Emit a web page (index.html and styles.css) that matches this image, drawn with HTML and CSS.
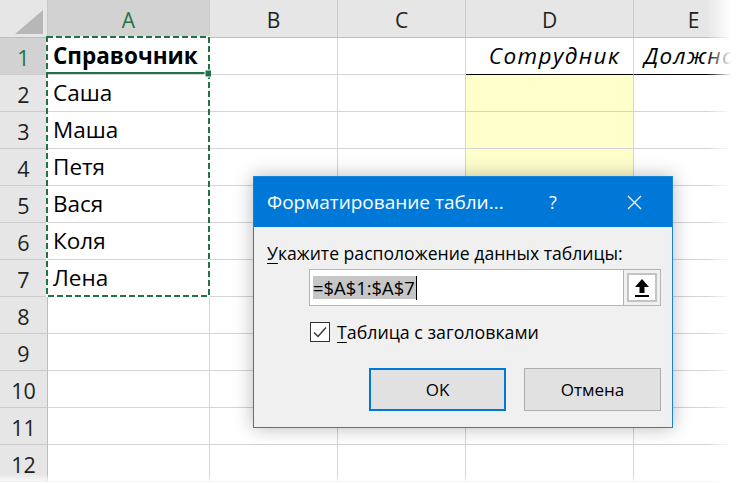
FILE: index.html
```html
<!DOCTYPE html>
<html lang="ru">
<head>
<meta charset="utf-8">
<link rel="stylesheet" href="styles.css">
</head>
<body>
<div class="sheet">
  <div class="grid">
    <div class="corner"><svg width="36" height="30" viewBox="0 0 36 30"><polygon points="34,4 34,28 6,28" fill="#b7b7b7"/></svg></div>
    <div class="ch sel">A</div><div class="ch">B</div><div class="ch">C</div><div class="ch">D</div><div class="ch">E</div>

    <div class="rh sel">1</div><div class="c b">Справочник</div><div class="c"></div><div class="c"></div><div class="c it th center">Сотрудник</div><div class="c it th">Должность</div>
    <div class="rh">2</div><div class="c">Саша</div><div class="c"></div><div class="c"></div><div class="c y"></div><div class="c"></div>
    <div class="rh">3</div><div class="c">Маша</div><div class="c"></div><div class="c"></div><div class="c y"></div><div class="c"></div>
    <div class="rh">4</div><div class="c">Петя</div><div class="c"></div><div class="c"></div><div class="c y"></div><div class="c"></div>
    <div class="rh">5</div><div class="c">Вася</div><div class="c"></div><div class="c"></div><div class="c y"></div><div class="c"></div>
    <div class="rh">6</div><div class="c">Коля</div><div class="c"></div><div class="c"></div><div class="c y"></div><div class="c"></div>
    <div class="rh">7</div><div class="c">Лена</div><div class="c"></div><div class="c"></div><div class="c y"></div><div class="c"></div>
    <div class="rh">8</div><div class="c"></div><div class="c"></div><div class="c"></div><div class="c"></div><div class="c"></div>
    <div class="rh">9</div><div class="c"></div><div class="c"></div><div class="c"></div><div class="c"></div><div class="c"></div>
    <div class="rh">10</div><div class="c"></div><div class="c"></div><div class="c"></div><div class="c"></div><div class="c"></div>
    <div class="rh">11</div><div class="c"></div><div class="c"></div><div class="c"></div><div class="c"></div><div class="c"></div>
    <div class="rh">12</div><div class="c"></div><div class="c"></div><div class="c"></div><div class="c"></div><div class="c"></div>
  </div>

  <svg class="marquee" width="165" height="263" viewBox="0 0 165 263">
    <rect x="1" y="1" width="162" height="259" fill="none" stroke="#ffffff" stroke-width="2"/>
    <rect x="1" y="1" width="162" height="259" fill="none" stroke="#217346" stroke-width="2" stroke-dasharray="6 3"/>
    <line x1="0" y1="37" x2="163" y2="37" stroke="#217346" stroke-width="2"/>
    <rect x="159" y="34" width="7" height="7" fill="#217346" stroke="#ffffff" stroke-width="1"/>
  </svg>

  <div class="fade-r"></div>
  <div class="fade-b"></div>

  <div class="dialog">
    <div class="titlebar">
      <span class="title">Форматирование табли...</span>
      <span class="help">?</span>
      <svg class="close" width="15" height="15" viewBox="0 0 15 15"><path d="M1 1L14 14M14 1L1 14" stroke="#fff" stroke-width="1.2"/></svg>
    </div>
    <div class="body">
      <div class="label"><u>У</u>кажите расположение данных таблицы:</div>
      <div class="refbox">
        <div class="field"><span class="selected">=$A$1:$A$7</span><span class="caret"></span></div>
        <div class="pick"><div class="pick-inner"><svg width="18" height="20" viewBox="0 0 18 20"><path d="M9 1L16 9H11.5V15H6.5V9H2Z" fill="#000"/><rect x="2" y="17" width="14" height="2" fill="#000"/></svg></div></div>
      </div>
      <label class="check"><span class="box"><svg width="16" height="14" viewBox="0 0 16 14"><path d="M2 7.5L6 11.5L14 2.5" fill="none" stroke="#333" stroke-width="1.4"/></svg></span><span><u>Т</u>аблица с заголовками</span></label>
      <div class="buttons">
        <div class="btn ok">OK</div>
        <div class="btn">Отмена</div>
      </div>
    </div>
  </div>
</div>
</body>
</html>
```

FILE: styles.css
```css
html, body {
  margin: 0;
  padding: 0;
  background: #ffffff;
}
.sheet {
  position: relative;
  width: 736px;
  height: 484px;
  overflow: hidden;
  font-family: "Open Sans", "Noto Sans", sans-serif;
}
.grid {
  display: grid;
  grid-template-columns: 48px 162px 128px 128px 168px 120px;
  grid-template-rows: 38px repeat(12, 37px);
}
.corner {
  background: #e6e6e6;
  border-right: 1px solid #c8c8c8;
  border-bottom: 1px solid #bdbdbd;
  display: flex;
  align-items: flex-end;
  justify-content: flex-end;
  padding: 0 2px 1px 0;
}
.ch {
  background: #e6e6e6;
  border-right: 1px solid #cbcbcb;
  border-bottom: 1px solid #bdbdbd;
  display: flex;
  align-items: center;
  justify-content: center;
  font-size: 21px;
  color: #222;
  padding-top: 2px;
}
.ch.sel {
  background: #d2d2d2;
  color: #217346;
}
.rh {
  background: #e6e6e6;
  border-right: 1px solid #bdbdbd;
  border-bottom: 1px solid #cbcbcb;
  display: flex;
  align-items: center;
  justify-content: center;
  font-size: 21.5px;
  color: #222;
  padding-top: 2px;
}
.rh.sel {
  background: #d2d2d2;
  color: #217346;
}
.c {
  border-right: 1px solid #d4d4d4;
  border-bottom: 1px solid #d4d4d4;
  display: flex;
  align-items: flex-end;
  padding: 0 0 5px 5px;
  font-size: 22.5px;
  color: #000;
  white-space: nowrap;
  overflow: hidden;
  line-height: 27px;
}
.c.b { font-weight: 700; }
.c.it { font-style: italic; letter-spacing: 1.4px; }
.c.center { justify-content: center; padding-left: 0; }
.c.th { border-bottom: 1px solid #000; padding-left: 10px; }
.c.y { background: #ffffcc; }

.marquee {
  position: absolute;
  left: 46px;
  top: 36px;
}
.fade-r {
  position: absolute;
  right: 0;
  top: 0;
  width: 30px;
  height: 484px;
  background: linear-gradient(to right, rgba(255,255,255,0), #ffffff 85%);
}
.fade-b {
  position: absolute;
  left: 0;
  bottom: 0;
  width: 736px;
  height: 10px;
  background: linear-gradient(to bottom, rgba(255,255,255,0), #ffffff);
}

.dialog {
  position: absolute;
  left: 253px;
  top: 176px;
  width: 418px;
  height: 250px;
  border: 1px solid #1883d7;
  background: #f0f0f0;
  box-shadow: 0 0 18px rgba(0,0,0,0.28);
  font-family: "Open Sans", "Noto Sans", sans-serif;
  color: #000;
}
.titlebar {
  height: 50px;
  background: #0078d7;
  display: flex;
  align-items: center;
  color: #fff;
}
.title {
  font-size: 19px;
  margin-left: 13px;
  width: 282px;
}
.help {
  font-size: 18px;
}
.close {
  margin-left: 70px;
}
.body {
  padding: 15px 0 0 13px;
}
.label {
  font-size: 17.6px;
  line-height: 23px;
}
.label u, .check u { text-decoration-thickness: 1px; text-underline-offset: 3px; }
.refbox {
  margin: 4px 0 0 42px;
  width: 352px;
  height: 37px;
  display: flex;
  box-sizing: border-box;
  border: 1px solid #b4b4b4;
  background: #fff;
}
.field {
  flex: 1;
  display: flex;
  align-items: center;
  padding-left: 3px;
}
.selected {
  background: #c6c6c6;
  font-size: 18.4px;
  line-height: 23px;
  padding-right: 1px;
}
.caret {
  width: 1px;
  height: 24px;
  background: #000;
}
.pick {
  width: 37px;
  height: 35px;
  box-sizing: border-box;
  background: #f0f0f0;
  border-left: 1px solid #b4b4b4;
  padding: 3px;
}
.pick-inner {
  width: 100%;
  height: 100%;
  background: #fff;
  display: flex;
  align-items: center;
  justify-content: center;
  box-shadow: inset 0 0 0 2px #c3c3c3;
}
.check {
  display: flex;
  align-items: center;
  margin: 14px 0 0 43px;
  font-size: 17.8px;
  gap: 7px;
}
.box {
  width: 18px;
  height: 18px;
  border: 1px solid #333;
  background: #fff;
  display: flex;
  align-items: center;
  justify-content: center;
}
.buttons {
  display: flex;
  gap: 18px;
  margin: 24px 0 0 102px;
}
.btn {
  width: 137px;
  height: 43px;
  box-sizing: border-box;
  border: 1px solid #adadad;
  background: #e1e1e1;
  display: flex;
  align-items: center;
  justify-content: center;
  font-size: 17px;
}
.btn.ok {
  border: 2px solid #0078d7;
}
```
